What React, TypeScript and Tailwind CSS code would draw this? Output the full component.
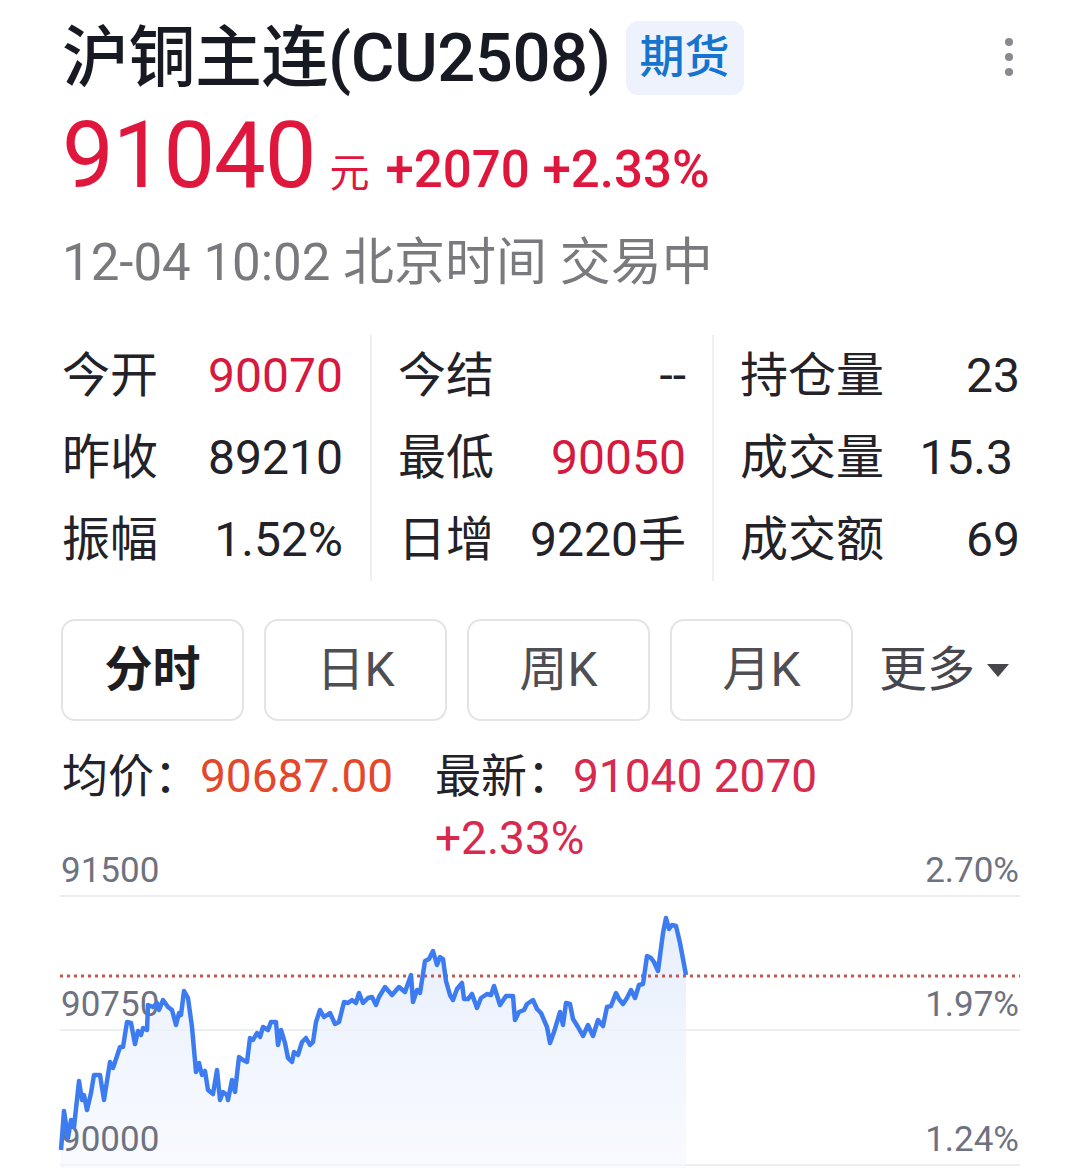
import React from "react";

// price line of the intraday chart, in page coordinates
const points: [number, number][] = [
  [61, 1150], [64, 1111], [68, 1138], [71, 1120], [74, 1127], [79, 1081], [82, 1100], [84, 1095],
  [87, 1110], [91, 1093], [94, 1075], [100, 1075], [104, 1100], [110, 1062], [113, 1068], [117, 1056],
  [120, 1047], [123, 1047], [127, 1022], [131, 1023], [135, 1044], [138, 1031], [141, 1035], [143, 1028],
  [147, 1030], [148, 1005], [153, 1007], [157, 1003], [159, 1010], [163, 1000], [168, 1007], [172, 1010],
  [176, 1025], [179, 1013], [181, 1015], [184, 991], [188, 998], [192, 1027], [196, 1072], [199, 1063],
  [202, 1075], [205, 1071], [208, 1090], [213, 1094], [217, 1070], [220, 1100], [223, 1092], [227, 1095],
  [228, 1100], [232, 1080], [235, 1092], [239, 1057], [243, 1060], [247, 1062], [250, 1038], [253, 1040],
  [257, 1033], [260, 1037], [263, 1027], [268, 1030], [271, 1022], [276, 1022], [278, 1045], [281, 1030],
  [285, 1043], [288, 1058], [292, 1062], [294, 1052], [298, 1055], [302, 1042], [306, 1038], [310, 1045],
  [313, 1042], [316, 1022], [320, 1010], [324, 1017], [330, 1013], [335, 1024], [339, 1022], [344, 1002],
  [348, 1003], [352, 1000], [356, 1003], [359, 993], [363, 1003], [368, 998], [372, 997], [376, 1005],
  [379, 997], [385, 987], [392, 995], [399, 987], [405, 992], [411, 975], [413, 1002], [417, 990],
  [420, 993], [425, 961], [429, 959], [433, 951], [437, 965], [440, 957], [443, 959], [446, 981],
  [450, 995], [453, 1000], [457, 989], [462, 983], [464, 999], [468, 999], [472, 994], [477, 1008],
  [481, 998], [487, 994], [491, 995], [494, 986], [500, 1005], [506, 996], [513, 996], [515, 1020],
  [519, 1012], [524, 1010], [527, 1004], [533, 1000], [537, 1009], [541, 1013], [547, 1027], [550, 1043],
  [554, 1032], [560, 1012], [563, 1025], [566, 1003], [570, 1004], [573, 1019], [578, 1027], [583, 1036],
  [588, 1025], [593, 1036], [598, 1020], [603, 1026], [607, 1007], [611, 1006], [616, 993], [619, 999],
  [623, 1004], [627, 998], [631, 990], [635, 998], [639, 985], [643, 984], [647, 956], [651, 958],
  [654, 962], [658, 971], [663, 933], [666, 918], [669, 929], [672, 925], [676, 926], [680, 943],
  [683, 959], [686, 975],
];

const linePath = points.map(([x, y], i) => `${i === 0 ? "M" : "L"}${x} ${y}`).join(" ");
const areaPath = `${linePath} L686 1168 L61 1168 Z`;

const stats = [
  [
    { label: "今开", value: "90070", red: true },
    { label: "昨收", value: "89210" },
    { label: "振幅", value: "1.52%" },
  ],
  [
    { label: "今结", value: "--" },
    { label: "最低", value: "90050", red: true },
    { label: "日增", value: "9220手" },
  ],
  [
    { label: "持仓量", value: "23" },
    { label: "成交量", value: "15.3", pad: true },
    { label: "成交额", value: "69" },
  ],
];

const tabs = ["分时", "日K", "周K", "月K"];

export default function App() {
  return (
    <div
      className="w-[1080px] h-[1168px] overflow-hidden bg-white"
      style={{ fontFamily: 'Roboto, "Noto Sans CJK SC", sans-serif' }}
    >
      {/* header */}
      <div className="pl-[62px] pr-[66px] pt-[18px]">
        <div className="flex items-center justify-between h-[80px]">
          <div className="flex items-center">
            <span className="text-[67px] leading-[80px] font-medium text-[#171a22] tracking-[-0.5px]">
              沪铜主连(CU2508)
            </span>
            <span className="ml-[15px] h-[74px] px-[14px] flex items-center rounded-[12px] bg-[#edf2fd] text-[45px] font-medium text-[#1674cf]">
              期货
            </span>
          </div>
          <svg width="10" height="42" viewBox="0 0 10 42">
            <circle cx="5" cy="5" r="4" fill="#8a8a8e" />
            <circle cx="5" cy="20" r="4" fill="#8a8a8e" />
            <circle cx="5" cy="35" r="4" fill="#8a8a8e" />
          </svg>
        </div>

        <div className="mt-[6px] flex items-baseline h-[104px] text-[#e0173d]">
          <span className="text-[92px] leading-[104px] tracking-[-1px]">91040</span>
          <span className="ml-[14px] text-[40px]">元</span>
          <span className="ml-[16px] text-[51px] font-medium">+2070 +2.33%</span>
        </div>

        <div className="mt-[25px] text-[51px] leading-[60px] text-[#7a7a7e]">
          12-04 10:02 北京时间 交易中
        </div>
      </div>

      {/* stats */}
      <div className="mt-[42px] ml-[62px] flex text-[48px] leading-[82px] text-[#222228]">
        {stats.map((col, ci) => (
          <div
            key={ci}
            className={
              ci === 0
                ? "w-[310px] pr-[27px] border-r-2 border-[#f0f0f2]"
                : ci === 1
                ? "w-[342px] px-[26px] border-r-2 border-[#f0f0f2]"
                : "w-[306px] pl-[26px]"
            }
          >
            {col.map((s) => (
              <div key={s.label} className="flex justify-between">
                <span>{s.label}</span>
                <span className={(s.red ? "text-[#d6193e]" : "") + (s.pad ? " pr-[7px]" : "")}>
                  {s.value}
                </span>
              </div>
            ))}
          </div>
        ))}
      </div>

      {/* period tabs */}
      <div className="mt-[38px] ml-[61px] flex items-center gap-[20px]">
        {tabs.map((t, i) => (
          <div
            key={t}
            className={
              "w-[183px] h-[102px] flex items-center justify-center rounded-[14px] border-2 border-[#e4e4e6] text-[48px] " +
              (i === 0 ? "font-bold text-[#1e1e22]" : "text-[#4e4e54]")
            }
          >
            {t}
          </div>
        ))}
        <div className="ml-[6px] flex items-center text-[48px] text-[#46464c]">
          更多
          <svg className="ml-[10px]" width="26" height="18" viewBox="0 0 26 18">
            <path d="M2 3 L24 3 L13 16 Z" fill="#46464c" />
          </svg>
        </div>
      </div>

      {/* legend */}
      <div className="mt-[24px] ml-[62px] flex text-[46px] leading-[62px]">
        <div className="w-[373px] flex">
          <span className="text-[#222228]">均价：</span>
          <span className="text-[#e4472c]">90687.00</span>
        </div>
        <div className="w-[400px]">
          <div className="flex">
            <span className="text-[#222228]">最新：</span>
            <span className="text-[#d8294f]">91040 2070</span>
          </div>
          <div className="text-[#d8294f]">+2.33%</div>
        </div>
      </div>

      {/* intraday chart */}
      <svg
        className="block -mt-[19px]"
        width="1080"
        height="318"
        viewBox="0 850 1080 318"
        style={{ fontFamily: "Roboto, sans-serif" }}
      >
        <defs>
          <linearGradient id="fill" x1="0" y1="0" x2="0" y2="1">
            <stop offset="0%" stopColor="#e2ebfc" stopOpacity="0.85" />
            <stop offset="100%" stopColor="#f4f7fe" stopOpacity="0.6" />
          </linearGradient>
        </defs>
        <line x1="60" y1="896" x2="1020" y2="896" stroke="#eceef2" strokeWidth="2" />
        <line x1="60" y1="1030" x2="1020" y2="1030" stroke="#eceef2" strokeWidth="2" />
        <line x1="60" y1="1165" x2="1020" y2="1165" stroke="#eceef2" strokeWidth="2" />
        <path d={areaPath} fill="url(#fill)" />
        <line
          x1="60"
          y1="976"
          x2="1020"
          y2="976"
          stroke="#c2574e"
          strokeWidth="3"
          strokeDasharray="3 4"
        />
        <g fontSize="35" fill="#6e7280">
          <text x="61" y="882">91500</text>
          <text x="61" y="1016">90750</text>
          <text x="61" y="1151">90000</text>
          <text x="1019" y="882" textAnchor="end">2.70%</text>
          <text x="1019" y="1016" textAnchor="end">1.97%</text>
          <text x="1019" y="1151" textAnchor="end">1.24%</text>
        </g>
        <path d={linePath} fill="none" stroke="#3d7cf0" strokeWidth="4.5" strokeLinejoin="round" />
      </svg>
    </div>
  );
}
